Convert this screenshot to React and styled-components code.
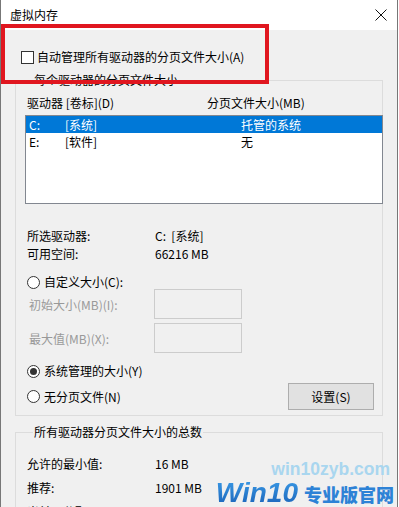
import React from 'react';
import styled, { createGlobalStyle } from 'styled-components';

const GlobalStyle = createGlobalStyle`
  html, body {
    margin: 0;
    padding: 0;
    background: #ffffff;
  }
  body {
    font-family: "Noto Sans CJK SC", "Liberation Sans", sans-serif;
    font-size: 12px;
    color: #000;
  }
`;

const Window = styled.div`
  position: relative;
  width: 398px;
  height: 507px;
  box-sizing: border-box;
  border-left: 1px solid #777;
  border-right: 1px solid #777;
  overflow: hidden;
  display: flex;
  flex-direction: column;
`;

const TitleBar = styled.div`
  height: 30px;
  flex: none;
  background: #fff;
  display: flex;
  align-items: center;
  justify-content: space-between;
  padding: 0 9px 0 9px;
  line-height: 16px;
`;

const Body = styled.div`
  flex: 1;
  background: #f0f0f0;
  padding: 19px 14px 0 14px;
`;

const CheckRow = styled.label`
  display: flex;
  align-items: center;
  gap: 3px;
  height: 16px;
  line-height: 16px;
  margin-left: 6px;
`;

const CheckBox = styled.span`
  width: 13px;
  height: 13px;
  box-sizing: border-box;
  border: 1px solid #333;
  background: #fff;
`;

const Group = styled.fieldset`
  margin: ${p => p.$top}px 0 0 0;
  padding: ${p => p.$padTop}px 0 ${p => p.$padBottom}px 10px;
  width: 368px;
  box-sizing: border-box;
  border: 1px solid #dcdcdc;
  min-width: 0;
`;

const Legend = styled.legend`
  margin-left: 7px;
  padding: 0 1px;
  line-height: 16px;
`;

const Header = styled.div`
  display: flex;
  line-height: 16px;
  padding-left: 1px;
`;

const HeaderCol = styled.span`
  width: ${p => p.$w || 'auto'};
`;

const List = styled.div`
  margin: 4px 0 0 -1px;
  width: 358px;
  height: 89px;
  box-sizing: border-box;
  border: 1px solid #828790;
  background: #fff;
`;

const ListRow = styled.div`
  display: flex;
  height: 17px;
  line-height: 17px;
  padding-left: 3px;
  background: ${p => (p.$selected ? '#0078d7' : 'transparent')};
  color: ${p => (p.$selected ? '#fff' : '#000')};
`;

const Cell = styled.span`
  width: ${p => p.$w};
  flex: none;
`;

const InfoGrid = styled.div`
  display: grid;
  grid-template-columns: 128px 1fr;
  grid-auto-rows: ${p => p.$row}px;
  align-items: center;
  margin-top: ${p => p.$top}px;
  padding-left: 1px;
`;

const RadioRow = styled.label`
  display: flex;
  align-items: center;
  gap: 4px;
  height: 16px;
  line-height: 16px;
  margin: ${p => p.$top}px 0 0 1px;
`;

const Radio = styled.span`
  width: 13px;
  height: 13px;
  box-sizing: border-box;
  border-radius: 50%;
  border: 1px solid #333;
  background: #fff;
  display: flex;
  align-items: center;
  justify-content: center;

  &::after {
    content: '';
    width: 7px;
    height: 7px;
    border-radius: 50%;
    background: ${p => (p.$checked ? '#333' : 'transparent')};
  }
`;

const SizeRow = styled.div`
  display: flex;
  align-items: center;
  margin-top: ${p => p.$top}px;
`;

const SizeLabel = styled.span`
  width: 125px;
  padding-left: 3px;
  color: #999;
`;

const SizeInput = styled.div`
  width: 88px;
  height: 30px;
  box-sizing: border-box;
  border: 1px solid #cccccc;
  background: #f0f0f0;
`;

const BottomRow = styled.div`
  display: flex;
  align-items: center;
  justify-content: space-between;
  margin-top: 4px;
  padding-right: 8px;
`;

const Button = styled.button`
  width: 86px;
  height: 27px;
  border: 1px solid #adadad;
  background: #e1e1e1;
  font-family: inherit;
  font-size: 12px;
  color: #000;
  padding: 0;
`;

const Highlight = styled.div`
  position: absolute;
  left: 0;
  top: 24px;
  width: 268px;
  height: 60px;
  box-sizing: border-box;
  border: 4px solid #e0161f;
  pointer-events: none;
`;

const Watermark = styled.div`
  position: absolute;
  right: 3px;
  top: 459px;
  display: flex;
  flex-direction: column;
  align-items: flex-end;
`;

const Site = styled.span`
  font-family: "Liberation Sans", Arial, sans-serif;
  font-weight: bold;
  font-size: 17.5px;
  line-height: 20px;
  color: #a9d6ef;
  margin-right: 4px;
`;

const Brand = styled.div`
  display: flex;
  align-items: baseline;
  gap: 6px;
  margin-top: 0;
`;

const BrandWin = styled.span`
  font-family: "Liberation Sans", Arial, sans-serif;
  font-weight: bold;
  font-style: italic;
  font-size: 28px;
  line-height: 28px;
  color: #2377cc;
  background: linear-gradient(180deg, #3a9ae6, #1a62b8);
  -webkit-background-clip: text;
  background-clip: text;
  -webkit-text-fill-color: transparent;
`;

const BrandCn = styled.span`
  font-weight: 900;
  font-size: 18px;
  line-height: 22px;
  color: #2d82d6;
  letter-spacing: 0;
`;

const CloseIcon = () => (
  <svg width="12" height="12" viewBox="0 0 12 12" style={{ marginRight: 1 }}>
    <path d="M0.5 0.5 L11.5 11.5 M11.5 0.5 L0.5 11.5" stroke="#111" strokeWidth="1" fill="none" />
  </svg>
);

export default function App() {
  return (
    <>
      <GlobalStyle />
      <Window>
        <TitleBar>
          <span>虚拟内存</span>
          <CloseIcon />
        </TitleBar>
        <Body>
          <CheckRow>
            <CheckBox />
            <span>自动管理所有驱动器的分页文件大小(A)</span>
          </CheckRow>

          <Group $top={7} $padTop={7} $padBottom={5}>
            <Legend>每个驱动器的分页文件大小</Legend>
            <Header>
              <HeaderCol $w="180px">驱动器 [卷标](D)</HeaderCol>
              <HeaderCol>分页文件大小(MB)</HeaderCol>
            </Header>
            <List>
              <ListRow $selected>
                <Cell $w="36px">C:</Cell>
                <Cell $w="176px">[系统]</Cell>
                <Cell $w="auto">托管的系统</Cell>
              </ListRow>
              <ListRow>
                <Cell $w="36px">E:</Cell>
                <Cell $w="176px">[软件]</Cell>
                <Cell $w="auto">无</Cell>
              </ListRow>
            </List>

            <InfoGrid $top={22} $row={18}>
              <span>所选驱动器:</span>
              <span>C:&nbsp;&nbsp;[系统]</span>
              <span>可用空间:</span>
              <span>66216 MB</span>
            </InfoGrid>

            <RadioRow $top={12}>
              <Radio />
              <span>自定义大小(C):</span>
            </RadioRow>
            <SizeRow $top={-1}>
              <SizeLabel>初始大小(MB)(I):</SizeLabel>
              <SizeInput />
            </SizeRow>
            <SizeRow $top={4}>
              <SizeLabel>最大值(MB)(X):</SizeLabel>
              <SizeInput />
            </SizeRow>

            <RadioRow $top={10}>
              <Radio $checked />
              <span>系统管理的大小(Y)</span>
            </RadioRow>
            <BottomRow>
              <RadioRow $top={0}>
                <Radio />
                <span>无分页文件(N)</span>
              </RadioRow>
              <Button>设置(S)</Button>
            </BottomRow>
          </Group>

          <Group $top={8} $padTop={11} $padBottom={10}>
            <Legend>所有驱动器分页文件大小的总数</Legend>
            <InfoGrid $top={0} $row={24}>
              <span>允许的最小值:</span>
              <span>16 MB</span>
              <span>推荐:</span>
              <span>1901 MB</span>
              <span>当前已分配:</span>
              <span>2048 MB</span>
            </InfoGrid>
          </Group>
        </Body>

        <Highlight />
        <Watermark>
          <Site>win10zyb.com</Site>
          <Brand>
            <BrandWin>Win10</BrandWin>
            <BrandCn>专业版官网</BrandCn>
          </Brand>
        </Watermark>
      </Window>
    </>
  );
}
